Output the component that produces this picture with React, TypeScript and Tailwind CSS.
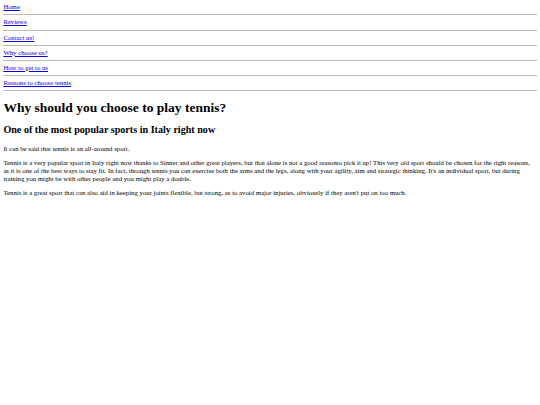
import React from 'react';

const links = [
  'Home',
  'Reviews',
  'Contact us!',
  'Why choose us?',
  'How to get to us',
  'Reasons to choose tennis',
];

const App = () => {
  return (
    <div className="min-h-screen bg-white">
      <div className="px-[3.375px] py-[3.375px] font-['Liberation_Serif',serif] text-[6.75px] text-black">
        <nav>
          {links.map((l) => (
            <div key={l}>
              <div className="leading-[8px]">
                <a href="#" className="text-[#0000ee] underline">
                  {l}
                </a>
              </div>
              <hr className="mt-[3.1px] mb-[3px] border-t border-[#bdbdbd]" />
            </div>
          ))}
        </nav>

        <h1 className="mt-[9.05px] mb-[8.4px] text-[13.5px] leading-[15.5px] font-bold">
          Why should you choose to play tennis?
        </h1>
        <h2 className="mt-[8.4px] mb-[9.4px] text-[10.125px] leading-[11.6px] font-bold">
          One of the most popular sports in Italy right now
        </h2>

        <div className="leading-[8px]">
          <p className="my-[6px]">It can be said that tennis is an all-around sport.</p>
          <p className="my-[6px]">
            Tennis is a very popular sport in Italy right now thanks to Sinner and other great players, but that alone
            is not a good reasonto pick it up! This very old sport should be chosen for the right reasons, as it is one
            of the best ways to stay fit. In fact, through tennis you can exercise both the arms and the legs, along
            with your agility, aim and strategic thinking. It's an individual sport, but during training you might be
            with other people and you might play a double.
          </p>
          <p className="my-[6px]">
            Tennis is a great sport that can also aid in keeping your joints flexible, but strong, as to avoid major
            injuries, obviously if they aren't put on too much.
          </p>
        </div>
      </div>
    </div>
  );
};

export default App;
